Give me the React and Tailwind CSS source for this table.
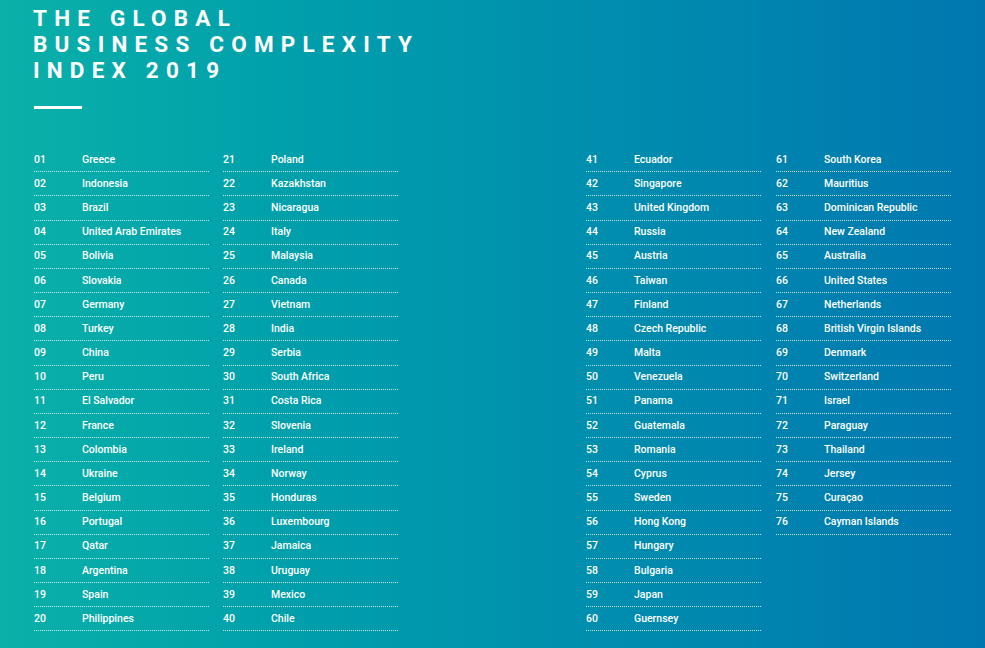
const countries = [
  'Greece', 'Indonesia', 'Brazil', 'United Arab Emirates', 'Bolivia', 'Slovakia', 'Germany', 'Turkey', 'China', 'Peru',
  'El Salvador', 'France', 'Colombia', 'Ukraine', 'Belgium', 'Portugal', 'Qatar', 'Argentina', 'Spain', 'Philippines',
  'Poland', 'Kazakhstan', 'Nicaragua', 'Italy', 'Malaysia', 'Canada', 'Vietnam', 'India', 'Serbia', 'South Africa',
  'Costa Rica', 'Slovenia', 'Ireland', 'Norway', 'Honduras', 'Luxembourg', 'Jamaica', 'Uruguay', 'Mexico', 'Chile',
  'Ecuador', 'Singapore', 'United Kingdom', 'Russia', 'Austria', 'Taiwan', 'Finland', 'Czech Republic', 'Malta', 'Venezuela',
  'Panama', 'Guatemala', 'Romania', 'Cyprus', 'Sweden', 'Hong Kong', 'Hungary', 'Bulgaria', 'Japan', 'Guernsey',
  'South Korea', 'Mauritius', 'Dominican Republic', 'New Zealand', 'Australia', 'United States', 'Netherlands', 'British Virgin Islands', 'Denmark', 'Switzerland',
  'Israel', 'Paraguay', 'Thailand', 'Jersey', 'Curaçao', 'Cayman Islands',
];

function Column({ start }) {
  const items = countries.slice(start, start + 20);
  return (
    <div className="w-[175px] flex flex-col">
      {items.map((name, i) => (
        <div key={name} className="h-[24.18px] flex items-center border-b border-dotted border-white/75 text-[10.5px] font-medium text-white">
          <span className="w-[48px] shrink-0">{String(start + i + 1).padStart(2, '0')}</span>
          <span>{name}</span>
        </div>
      ))}
    </div>
  );
}

export default function App() {
  return (
    <div className="w-[985px] h-[648px] overflow-hidden bg-gradient-to-r from-[#0bb0a8] to-[#0077b0] pl-[33px] pt-[5px] font-['Roboto',sans-serif]">
      <h1 className="text-[22.5px] leading-[26px] font-bold tracking-[0.32em] text-white">
        THE GLOBAL<br />BUSINESS COMPLEXITY<br />INDEX 2019
      </h1>
      <div className="mt-[23px] ml-[1px] w-[48px] h-[3px] bg-white" />
      <div className="mt-[39px] ml-[1px] flex">
        <Column start={0} />
        <div className="ml-[14px]"><Column start={20} /></div>
        <div className="ml-[188px]"><Column start={40} /></div>
        <div className="ml-[15px]"><Column start={60} /></div>
      </div>
    </div>
  );
}
